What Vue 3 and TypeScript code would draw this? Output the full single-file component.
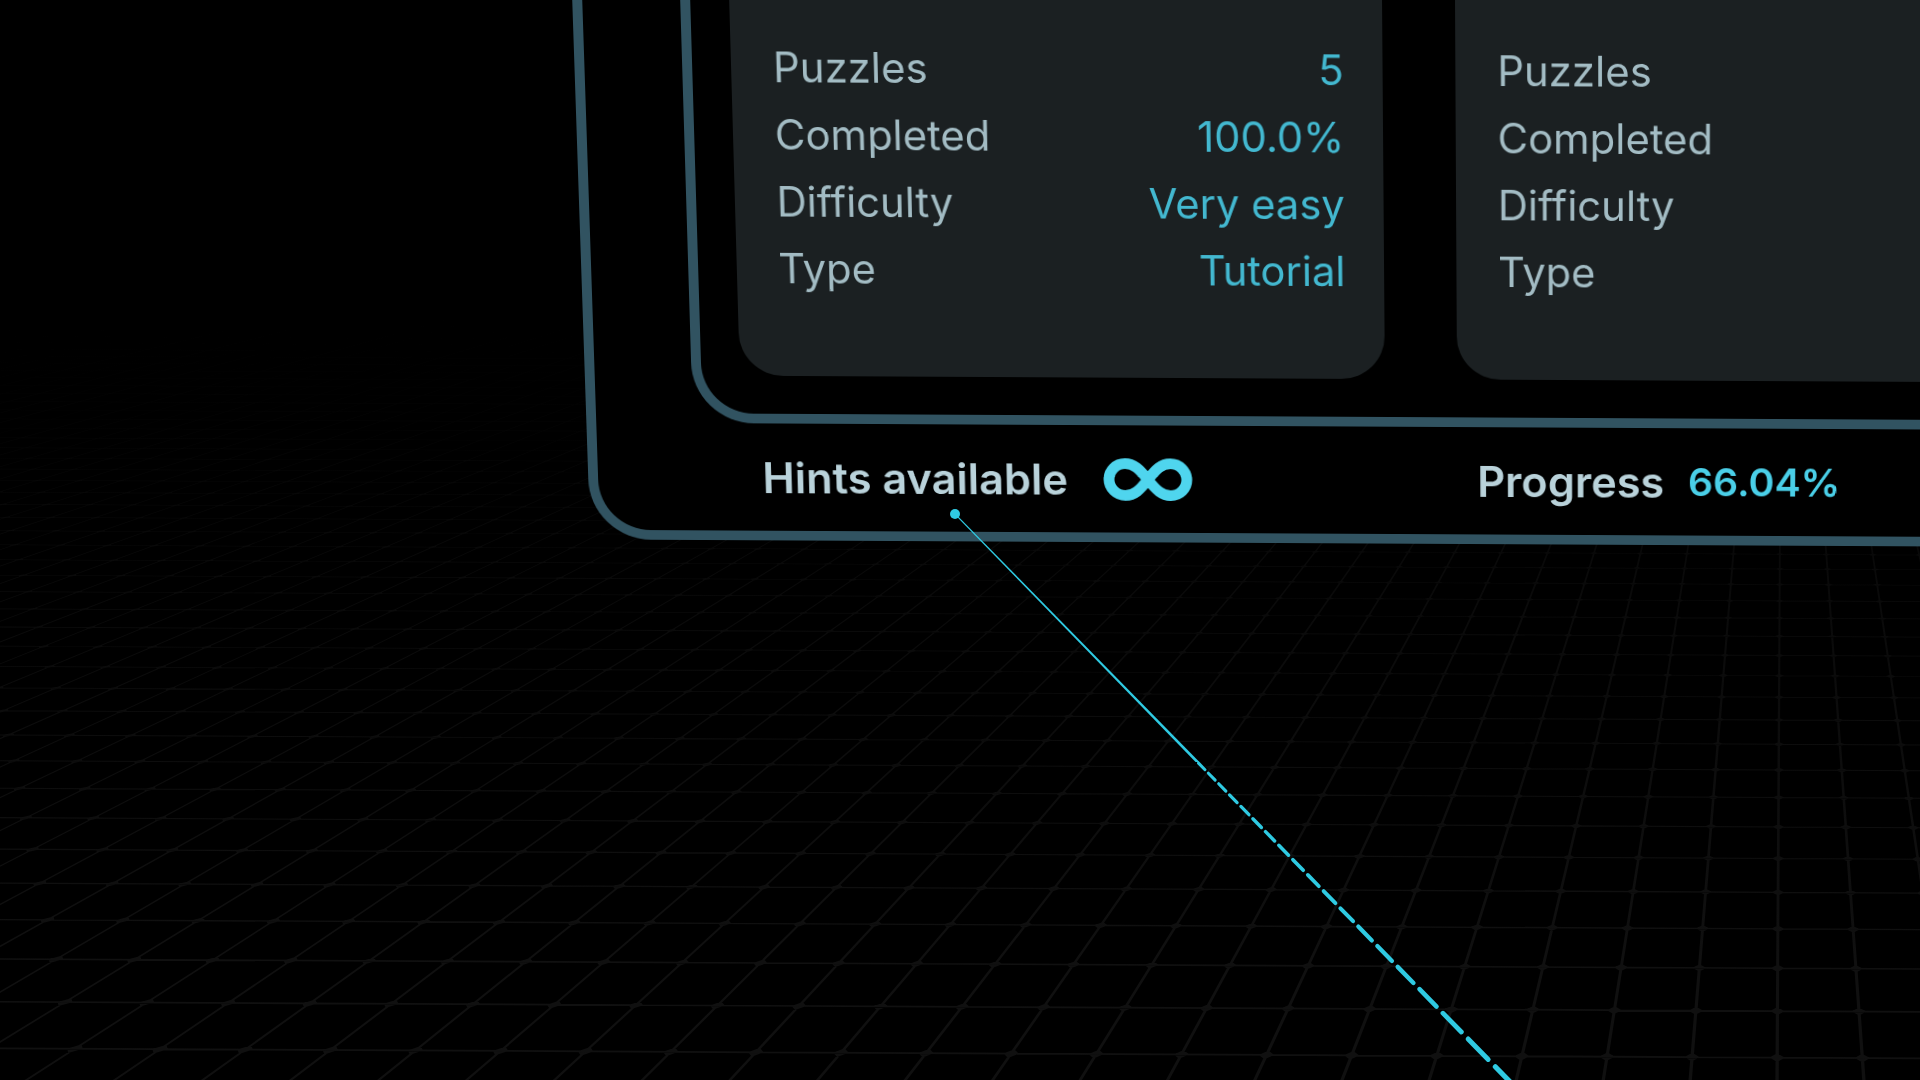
<script setup lang="ts">
interface Stat {
  label: string
  value?: string
}

interface Dash {
  x1: number
  y1: number
  x2: number
  y2: number
  width: number
}

const packs: Stat[][] = [
  [
    { label: 'Puzzles', value: '5' },
    { label: 'Completed', value: '100.0%' },
    { label: 'Difficulty', value: 'Very easy' },
    { label: 'Type', value: 'Tutorial' },
  ],
  [
    { label: 'Puzzles' },
    { label: 'Completed' },
    { label: 'Difficulty' },
    { label: 'Type' },
  ],
]

// Floor grid: unit cells on a plane, projected towards one vanishing point.
const vanishX = 1783
const vanishY = -51
const rowScale = 25320
const columnScale = 1944
const nearest = 22.84
const farthest = nearest + 52
const halfLine = 0.019
const halfNode = 0.09

function project(column: number, depth: number): string {
  const x = vanishX + (column * columnScale) / depth
  const y = vanishY + rowScale / depth
  return `${x.toFixed(1)} ${y.toFixed(1)}`
}

function quad(points: [number, number][]): string {
  return 'M' + points.map(([c, d]) => project(c, d)).join('L') + 'Z'
}

function buildFloor(): string {
  const parts: string[] = []
  for (let c = -76; c <= 4; c++) {
    parts.push(
      quad([
        [c - halfLine, nearest - 2],
        [c + halfLine, nearest - 2],
        [c + halfLine, farthest],
        [c - halfLine, farthest],
      ]),
    )
  }
  for (let r = 0; r <= 52; r++) {
    const d = nearest + r
    parts.push(
      quad([
        [-76, d - halfLine],
        [4, d - halfLine],
        [4, d + halfLine],
        [-76, d + halfLine],
      ]),
    )
    if (r > 26) continue
    for (let c = -44; c <= 3; c++) {
      parts.push(
        quad([
          [c - halfNode, d],
          [c, d - halfNode],
          [c + halfNode, d],
          [c, d + halfNode],
        ]),
      )
    }
  }
  return parts.join('')
}

const floorPath = buildFloor()

// Pointer ray: equal dashes that shrink with distance.
const tip = { x: 955, y: 514 }
const raySlope = 1.023
const rayVanishX = 784
const firstDash = -5
const rayY = (x: number) => tip.y + (x - tip.x) * raySlope
const rayX = (n: number) => rayVanishX + 17838 / (38.14 - n)
const rayWidth = (x: number) => (x - rayVanishX) * 0.0072

function buildDashes(): Dash[] {
  const list: Dash[] = []
  for (let n = firstDash; n <= 14; n++) {
    const start = rayX(n)
    const end = rayX(n + 0.87)
    const width = rayWidth(start)
    const cap = width * 0.35
    list.push({
      x1: start + cap,
      y1: rayY(start + cap),
      x2: end - cap,
      y2: rayY(end - cap),
      width,
    })
  }
  return list
}

const dashes = buildDashes()
const solidEnd = rayX(firstDash)
const solidRay = `M${tip.x - 0.8} ${tip.y}L${tip.x + 0.8} ${tip.y}L${solidEnd + 1.9} ${rayY(solidEnd)}L${solidEnd - 1.9} ${rayY(solidEnd)}Z`
</script>

<template>
  <main class="scene">
    <svg class="layer" viewBox="0 0 1920 1080" preserveAspectRatio="xMidYMid slice" aria-hidden="true">
      <defs>
        <linearGradient id="fade" gradientUnits="userSpaceOnUse" x1="0" y1="320" x2="0" y2="960">
          <stop offset="0" stop-color="#101010" stop-opacity="0" />
          <stop offset="0.4" stop-color="#101010" stop-opacity="0.6" />
          <stop offset="1" stop-color="#101010" stop-opacity="1" />
        </linearGradient>
      </defs>
      <path :d="floorPath" fill="url(#fade)" fill-rule="nonzero" transform="rotate(0.3 1780 -51)" />
    </svg>

    <section class="board">
      <div class="frame">
        <div class="packs">
          <article v-for="(stats, i) in packs" :key="i" class="card">
            <dl class="stats">
              <div v-for="stat in stats" :key="stat.label" class="stat">
                <dt>{{ stat.label }}</dt>
                <dd v-if="stat.value">{{ stat.value }}</dd>
              </div>
            </dl>
          </article>
        </div>
        <footer class="summary">
          <div class="item">
            <span>Hints available</span>
            <svg class="infinity" viewBox="0 0 91 44" role="img" aria-label="Unlimited">
              <path
                d="M45.500 22C37 11 31.500 5.500 22.500 5.500A16.500 16.500 0 0 0 22.500 38.500C31.500 38.500 37 33 45.500 22C54 11 59.500 5.500 68.500 5.500A16.500 16.500 0 0 1 68.500 38.500C59.500 38.500 54 33 45.500 22Z"
              />
            </svg>
          </div>
          <div class="item">
            <span>Progress</span>
            <strong>66.04%</strong>
          </div>
        </footer>
      </div>
    </section>

    <svg class="layer ray" viewBox="0 0 1920 1080" preserveAspectRatio="xMidYMid slice" aria-hidden="true">
      <path :d="solidRay" />
      <line
        v-for="(dash, i) in dashes"
        :key="i"
        :x1="dash.x1"
        :y1="dash.y1"
        :x2="dash.x2"
        :y2="dash.y2"
        :stroke-width="dash.width"
      />
      <circle :cx="tip.x" :cy="tip.y" r="5" />
    </svg>
  </main>
</template>

<style>
body {
  margin: 0;
  background: #000;
}
</style>

<style scoped>
.scene {
  display: flow-root;
  position: relative;
  box-sizing: border-box;
  min-height: 100vh;
  overflow: hidden;
  background: #000;
  font-family: Inter, "Open Sans", sans-serif;
  font-size: 42px;
}

.layer {
  position: absolute;
  inset: 0;
  width: 100%;
  height: 100%;
}

.ray {
  pointer-events: none;
  fill: #2fcae2;
}

.ray line {
  stroke: #2fcae2;
  stroke-linecap: round;
}

/* The board starts above the window; its clear margin keeps the tilted edges smooth. */
.board {
  position: relative;
  box-sizing: border-box;
  width: 126.4%;
  margin-top: -20px;
  margin-left: 29.6%;
  padding: 0 4px 4px;
  transform: rotate(0.3deg) perspective(2400px) rotateX(-4.4deg);
  transform-origin: 50% 20px;
}

.frame {
  padding: 0 98px;
  border: 10px solid #315361;
  border-top: 0;
  border-radius: 0 0 62px 62px;
  background: #000;
}

.packs {
  display: grid;
  grid-template-columns: repeat(3, 1fr);
  gap: 73px;
  padding: 0 39px 39px;
  border: 10px solid #315361;
  border-top: 0;
  border-radius: 0 0 62px 62px;
}

.card {
  padding: 59px 39px 76px 42px;
  border-radius: 0 0 44px 44px;
  background: #1b2022;
}

.stats {
  margin: 0;
}

.stat {
  display: flex;
  justify-content: space-between;
  line-height: 68px;
}

.stat dt {
  color: #a3bcc4;
}

.stat dd {
  margin: 0;
  color: #43b8d0;
}

.summary {
  display: grid;
  grid-template-columns: repeat(3, 1fr);
  gap: 73px;
  padding: 0 49px;
  height: 111px;
  align-items: center;
}

.item {
  display: flex;
  align-items: center;
  gap: 24px;
  padding-left: 20px;
  color: #b9d2da;
  font-size: 44px;
  font-weight: 600;
}

.item strong {
  color: #4acfe8;
  font-size: 40px;
  font-weight: 600;
}

.infinity {
  width: 91px;
  height: 44px;
  margin-left: 12px;
  overflow: visible;
  fill: none;
  stroke: #4fd5ee;
  stroke-width: 11px;
}
</style>
